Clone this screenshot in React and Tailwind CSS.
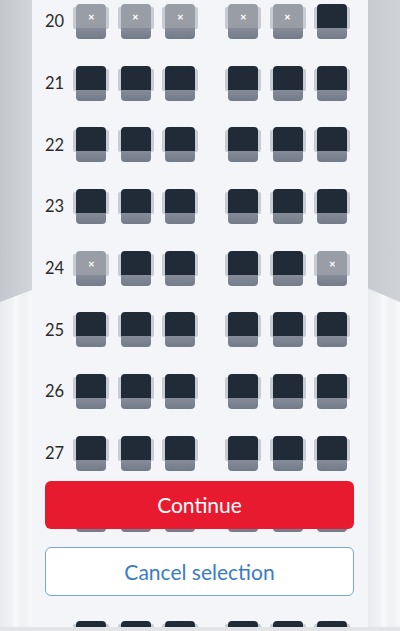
import React from "react";

const ROWS = [
  { n: 20, taken: [0, 1, 2, 3, 4] },
  { n: 21, taken: [] },
  { n: 22, taken: [] },
  { n: 23, taken: [] },
  { n: 24, taken: [0, 5] },
  { n: 25, taken: [] },
  { n: 26, taken: [] },
  { n: 27, taken: [] },
  { n: 28, taken: [] },
  { n: 29, taken: [] },
  { n: 30, taken: [], hideLabel: true },
];

const Seat = ({ taken }) => (
  <div className="relative h-[35px] w-[36px] shrink-0">
    <div className="absolute left-0 top-[3px] h-[22px] w-[5px] rounded-[2px] bg-[#c7ccd4]" />
    <div className="absolute right-0 top-[3px] h-[22px] w-[5px] rounded-[2px] bg-[#c7ccd4]" />
    <div className="relative mx-[3px] flex h-full flex-col">
      <div
        className={`flex h-[24px] items-start justify-center rounded-t-[4px] pt-[9px] ${
          taken ? "bg-[#989da6]" : "bg-[#212a37]"
        }`}
      >
        {taken ? <span className="text-[8px] font-bold leading-none text-white">✕</span> : null}
      </div>
      <div className="h-[11px] rounded-b-[4px] bg-[linear-gradient(to_bottom,#868c99,#737a88)]" />
    </div>
  </div>
);

const SeatRow = ({ row }) => (
  <div className="flex h-[61.67px] items-center pl-[13px]">
    <span className="w-[28px] text-[16.5px] leading-none text-[#2b2b2b]">{row.hideLabel ? "" : row.n}</span>
    <div className="flex gap-[8.5px]">
      {[0, 1, 2].map((i) => (
        <Seat key={i} taken={row.taken.includes(i)} />
      ))}
    </div>
    <div className="ml-[27px] flex gap-[8.5px]">
      {[3, 4, 5].map((i) => (
        <Seat key={i} taken={row.taken.includes(i)} />
      ))}
    </div>
  </div>
);

const Wall = ({ side }) => (
  <div className="flex w-[32px] shrink-0 flex-col bg-[linear-gradient(to_right,#e9ebee,#eff1f3_35%,#f8f9fa_48%,#eef0f2_70%,#f6f7f9)]">
    <div
      className={`h-[302px] ${
        side === "left"
          ? "bg-[linear-gradient(to_right,#c3c6cb,#ccd0d4_60%,#d2d5d9)] [clip-path:polygon(0_0,100%_0,100%_96%,0_100%)]"
          : "bg-[linear-gradient(to_right,#c8cbd0,#ccd0d4_60%,#ced1d5)] [clip-path:polygon(0_0,100%_0,100%_100%,0_95.5%)]"
      }`}
    />
  </div>
);

export default function App() {
  return (
    <div
      className="relative h-[631px] w-[400px] overflow-hidden bg-[#f3f5f8]"
      style={{ fontFamily: "Lato, 'Open Sans', sans-serif" }}
    >
      <div className="flex h-full">
        <Wall side="left" />
        <div className="flex-1 overflow-hidden">
          <div className="mt-[-9.33px]">
            {ROWS.map((row) => (
              <SeatRow key={row.n} row={row} />
            ))}
          </div>
        </div>
        <Wall side="right" />
      </div>

      <div className="absolute inset-x-0 bottom-[35px] flex flex-col gap-[18px] pl-[45px] pr-[46px]">
        <button
          type="button"
          className="h-[48px] w-full rounded-[6px] bg-[#e81a30] text-[21px] text-white"
        >
          Continue
        </button>
        <button
          type="button"
          className="h-[49px] w-full rounded-[6px] border border-[#7da5d2] bg-white text-[21px] text-[#3a7bc8]"
        >
          Cancel selection
        </button>
      </div>

      <div className="absolute inset-x-0 bottom-0 h-[4px] bg-[#e2e4e8]" />
    </div>
  );
}
